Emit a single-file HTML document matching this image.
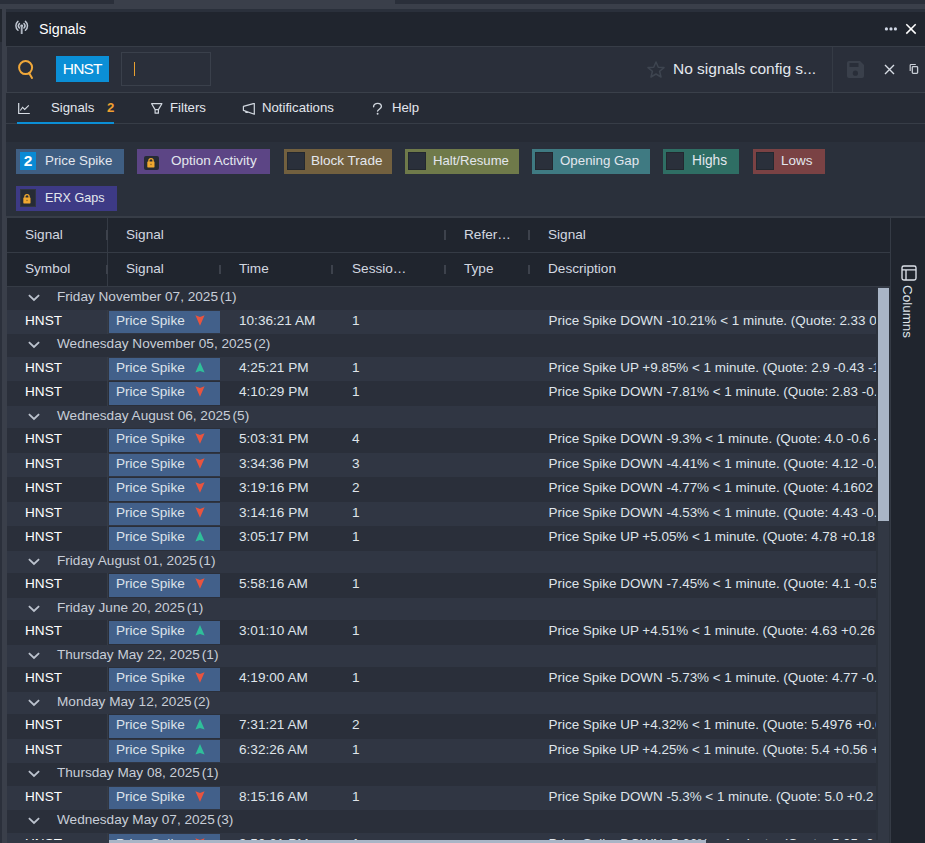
<!DOCTYPE html>
<html><head><meta charset="utf-8">
<style>
*{margin:0;padding:0;box-sizing:border-box}
html,body{width:925px;height:843px;overflow:hidden;background:#262b35;font-family:"Liberation Sans",sans-serif;color:#dfe4ea;font-size:13.6px}
.a{position:absolute}
.t{position:absolute;white-space:nowrap}
.chip{position:absolute;height:25px;color:#e3e7ee}
.chip span{position:absolute;top:4px;white-space:nowrap}
.num{position:absolute;left:4px;top:3px;width:16px;height:18px;background:#0a8ad4;color:#fff;font-weight:bold;font-size:15.5px;line-height:17.5px;text-align:center}
.cb{position:absolute;left:3px;top:3px;width:18px;height:18px;background:#2a303b;border:1px solid #23282f}
.lk{position:absolute;background:#262b35}
.hd{position:absolute;color:#d3d8e0;white-space:nowrap}
.tick{position:absolute;width:2px;height:10px;background:#3d424c}
.row{position:absolute;left:7px;width:869px;overflow:hidden;white-space:nowrap}
.even{background:#2a2f3a}
.odd{background:#303643}
.chev{position:absolute;left:20px;top:6px}
.gt{position:absolute;left:50px;top:1.5px;color:#c8ced8}
.gc{margin-left:2px}
.sep{position:absolute;left:100px;top:0;width:1px;height:100%;background:#363c46}
.sym{position:absolute;left:18px;top:2.5px;color:#fff}
.cell{position:absolute;left:102px;top:1px;width:111px;bottom:1px;background:#42608a;color:#dde3ea}
.cell span{position:absolute;left:7px;top:1.5px}
.ar{position:absolute;left:85.5px;top:4px}
.tm{position:absolute;left:232px;top:2.5px}
.ss{position:absolute;left:345px;top:2.5px}
.ds{position:absolute;left:541.5px;top:2.5px;font-size:13.45px}
</style></head><body>
<!-- frame -->
<div class="a" style="left:0;top:0;width:925px;height:4px;background:#2a2f3a"></div>
<div class="a" style="left:114px;top:0;width:281px;height:4px;background:#3a3f4a"></div>
<div class="a" style="left:0;top:4px;width:925px;height:839px;background:#2b303b"></div>
<div class="a" style="left:0;top:9px;width:2px;height:33px;background:#22272f"></div>
<div class="a" style="left:0;top:4px;width:925px;height:5px;background:#3a3f4a"></div>
<div class="a" style="left:2px;top:9px;width:5px;height:834px;background:#3a3f4a"></div>
<div class="a" style="left:6px;top:9px;width:919px;height:3px;background:#2a303b"></div>
<!-- header -->
<div class="a" style="left:6px;top:12px;width:919px;height:34px;background:#20252e"></div>
<svg class="a" style="left:14px;top:20px" width="16" height="15" viewBox="0 0 16 15"><g fill="none" stroke="#bfc6d1" stroke-width="1.5" stroke-linecap="round"><path d="M3.97 1.36 A5.8 5.8 0 0 0 3.97 10.24"/><path d="M11.43 1.36 A5.8 5.8 0 0 1 11.43 10.24"/><path d="M5.44 3.54 A3.2 3.2 0 0 0 5.44 8.06"/><path d="M9.96 3.54 A3.2 3.2 0 0 1 9.96 8.06"/></g><circle cx="7.7" cy="5.8" r="1.4" fill="#c8cfda"/><rect x="6.75" y="5.8" width="1.9" height="8.3" rx="0.5" fill="#aeb5c0"/></svg>
<span class="t" style="left:39px;top:21px;font-size:14.3px;color:#fff">Signals</span>
<svg class="a" style="left:883px;top:26px" width="16" height="6" viewBox="0 0 16 6"><circle cx="3.4" cy="2.9" r="1.6" fill="#d0d8e6"/><circle cx="8" cy="2.9" r="1.6" fill="#d0d8e6"/><circle cx="12.4" cy="2.9" r="1.6" fill="#d0d8e6"/></svg>
<svg class="a" style="left:904px;top:22px" width="14" height="14" viewBox="0 0 14 14"><path d="M2.3 2.2 L11.7 11.6 M11.7 2.2 L2.3 11.6" stroke="#fff" stroke-width="1.5"/></svg>
<div class="a" style="left:6px;top:46px;width:919px;height:1px;background:#373d47"></div>
<!-- toolbar -->
<div class="a" style="left:7px;top:47px;width:918px;height:45px;background:#2a2f3a"></div>
<svg class="a" style="left:14px;top:54px" width="26" height="30" viewBox="0 0 26 30"><circle cx="11.6" cy="13.6" r="6.5" fill="none" stroke="#f0a83a" stroke-width="2"/><path d="M15.2 19.2 L18 24" stroke="#f0a83a" stroke-width="2" stroke-linecap="round"/></svg>
<div class="a" style="left:56px;top:56px;width:53px;height:26px;background:#0b8fd6"></div>
<span class="t" style="left:62.8px;top:59.6px;font-size:15.5px;letter-spacing:-0.8px;color:#fff">HNST</span>
<div class="a" style="left:121px;top:52px;width:90px;height:34px;border:1px solid #3a404b"></div>
<div class="a" style="left:133.5px;top:62px;width:1.5px;height:14px;background:#e8a030"></div>
<svg class="a" style="left:646.5px;top:61px" width="18" height="17" viewBox="0 0 18 17"><path d="M9 1 L11.3 6.2 L17 6.6 L12.6 10.3 L14 16 L9 13 L4 16 L5.4 10.3 L1 6.6 L6.7 6.2 Z" fill="none" stroke="#3e4550" stroke-width="1.5" stroke-linejoin="round"/></svg>
<span class="t" style="left:673px;top:60px;font-size:15.5px;color:#e3e7ee">No signals config s...</span>
<div class="a" style="left:832px;top:47px;width:1px;height:45px;background:#353b45"></div>
<svg class="a" style="left:846px;top:60px" width="19" height="19" viewBox="0 0 19 19"><path d="M3 1 H14 L18 5 V16 Q18 18 16 18 H3 Q1 18 1 16 V3 Q1 1 3 1 Z" fill="#3a404b"/><rect x="3.5" y="3" width="9" height="4" fill="#292e39"/><circle cx="9.4" cy="13.2" r="2.6" fill="#292e39"/></svg>
<svg class="a" style="left:883px;top:63px" width="13" height="13" viewBox="0 0 13 13"><path d="M2 2 L11 11 M11 2 L2 11" stroke="#d8dde5" stroke-width="1.4"/></svg>
<svg class="a" style="left:908px;top:63px" width="12" height="12" viewBox="0 0 12 12"><path d="M2.2 8 V2.3 Q2.2 1.5 3 1.5 H7.8" fill="none" stroke="#c8ced6" stroke-width="1.2"/><rect x="4.3" y="3.6" width="5.3" height="6.8" rx="0.8" fill="none" stroke="#c8ced6" stroke-width="1.3"/></svg>
<div class="a" style="left:7px;top:92px;width:918px;height:1px;background:#3a404a"></div>
<!-- tabs -->
<div class="a" style="left:6px;top:93px;width:919px;height:49px;background:#262b35"></div>
<svg class="a" style="left:18px;top:103px" width="13" height="12" viewBox="0 0 13 12"><path d="M0.7 0 V10.5 H11.8" fill="none" stroke="#d8dde5" stroke-width="1.2"/><path d="M2.3 7.5 L4.6 4.3 L6.7 6.5 L10.8 2.3" fill="none" stroke="#d8dde5" stroke-width="1.1"/></svg>
<span class="t" style="left:51px;top:100px;font-size:13.2px;color:#e3e7ee">Signals</span>
<span class="t" style="left:107px;top:100px;font-size:13.2px;color:#f0a030;font-weight:bold">2</span>
<svg class="a" style="left:146px;top:98px" width="22" height="22" viewBox="0 0 22 22"><path d="M5.6 5.7 H15.9 L12.4 11.6 H9.1 Z M9.1 11.6 V15.2 H12.4 V11.6" fill="none" stroke="#d0d6de" stroke-width="1.2" stroke-linejoin="round"/></svg>
<span class="t" style="left:170px;top:100px;font-size:13.2px;color:#e3e7ee">Filters</span>
<svg class="a" style="left:242px;top:103px" width="14" height="13" viewBox="0 0 14 13"><path d="M1.4 3.4 L12.3 0.3 V11.3 L1.4 7.4 Z M3.4 8.1 L4 9.5 L5.8 9.3" fill="none" stroke="#d0d6de" stroke-width="1.2" stroke-linejoin="round"/></svg>
<span class="t" style="left:262px;top:100px;font-size:13.2px;color:#e3e7ee">Notifications</span>
<svg class="a" style="left:366px;top:98px" width="24" height="22" viewBox="0 0 24 22"><path d="M7.6 8.8 C7.6 6.6 9.4 5.4 11.7 5.4 C14 5.4 15.4 6.8 15.4 8.6 C15.4 10.6 12.6 11 11.6 13" fill="none" stroke="#d0d6de" stroke-width="1.4" stroke-linecap="round"/><circle cx="11.6" cy="15.7" r="0.95" fill="#d0d6de"/></svg>
<span class="t" style="left:392px;top:100px;font-size:13.2px;color:#e3e7ee">Help</span>
<div class="a" style="left:6px;top:123px;width:919px;height:1px;background:#373d47"></div>
<div class="a" style="left:17px;top:122px;width:97px;height:2px;background:#0b8fd6"></div>
<!-- chips -->
<div class="a" style="left:6px;top:142px;width:919px;height:74px;background:#2a303b"></div>

<div class="chip" style="left:16px;top:149px;width:108px;background:#3f5e82"><div class="num">2</div><span style="left:29px;font-size:13.33px">Price Spike</span></div>
<div class="chip" style="left:137px;top:149px;width:133px;background:#5c4585"><div class="lk" style="left:7px;top:7px;width:15px;height:14px;border-radius:2px"><svg width="8" height="10" viewBox="0 0 8 10" style="position:absolute;left:50%;top:50%;margin-left:-4.6px;margin-top:-5.5px"><path d="M1.9 4 V2.8 Q1.9 0.7 4 0.7 Q6.1 0.7 6.1 2.8 V4" fill="none" stroke="#f0a830" stroke-width="1.3"/><rect x="0.3" y="3.4" width="7.2" height="6" rx="0.6" fill="#f0a830"/><rect x="3.4" y="5.8" width="1.2" height="1.3" fill="#8a6420"/></svg></div><span style="left:34px;font-size:13.52px">Option Activity</span></div>
<div class="chip" style="left:284px;top:149px;width:108px;background:#72603f"><div class="cb"></div><span style="left:27px;font-size:13.54px">Block Trade</span></div>
<div class="chip" style="left:405px;top:149px;width:114px;background:#6f7a4a"><div class="cb"></div><span style="left:28px;font-size:13.14px">Halt/Resume</span></div>
<div class="chip" style="left:532px;top:149px;width:118px;background:#3f7a82"><div class="cb"></div><span style="left:28px;font-size:13.31px">Opening Gap</span></div>
<div class="chip" style="left:663px;top:149px;width:76px;background:#2f6e64"><div class="cb"></div><span style="left:29px;font-size:13.73px">Highs</span></div>
<div class="chip" style="left:753px;top:149px;width:72px;background:#7a4244"><div class="cb"></div><span style="left:28px;font-size:13.46px">Lows</span></div>
<div class="chip" style="left:16px;top:186px;width:101px;background:#3d3a85"><div class="lk" style="left:4px;top:3px;width:16px;height:18px;border:1px solid #30353f"><svg width="8" height="10" viewBox="0 0 8 10" style="position:absolute;left:50%;top:50%;margin-left:-4.6px;margin-top:-4px"><path d="M1.9 4 V2.8 Q1.9 0.7 4 0.7 Q6.1 0.7 6.1 2.8 V4" fill="none" stroke="#f0a830" stroke-width="1.3"/><rect x="0.3" y="3.4" width="7.2" height="6" rx="0.6" fill="#f0a830"/><rect x="3.4" y="5.8" width="1.2" height="1.3" fill="#8a6420"/></svg></div><span style="left:29px;top:5px;font-size:12.6px">ERX Gaps</span></div>

<div class="a" style="left:6px;top:216px;width:919px;height:2px;background:#373d47"></div>
<!-- grid header -->
<div class="a" style="left:7px;top:218px;width:918px;height:625px;background:#20252e"></div>
<div class="a" style="left:107px;top:218px;width:1px;height:68px;background:#353b45"></div>
<div class="a" style="left:7px;top:252px;width:883px;height:1px;background:#353b45"></div>
<div class="a" style="left:7px;top:286px;width:883px;height:1px;background:#353b45"></div>
<div class="a" style="left:890px;top:218px;width:1px;height:625px;background:#353b45"></div>
<span class="hd" style="left:25px;top:227px">Signal</span>
<span class="hd" style="left:126px;top:227px">Signal</span>
<span class="hd" style="left:464px;top:227px">Refer&hellip;</span>
<span class="hd" style="left:548px;top:227px">Signal</span>
<span class="hd" style="left:25px;top:261px">Symbol</span>
<span class="hd" style="left:126px;top:261px">Signal</span>
<span class="hd" style="left:239px;top:261px">Time</span>
<span class="hd" style="left:352px;top:261px">Sessio&hellip;</span>
<span class="hd" style="left:464px;top:261px">Type</span>
<span class="hd" style="left:548px;top:261px">Description</span>
<div class="tick" style="left:106px;top:230px"></div>
<div class="tick" style="left:444px;top:230px"></div>
<div class="tick" style="left:528px;top:230px"></div>
<div class="tick" style="left:106px;top:265px;height:9px"></div>
<div class="tick" style="left:219px;top:265px;height:9px"></div>
<div class="tick" style="left:331px;top:265px;height:9px"></div>
<div class="tick" style="left:444px;top:265px;height:9px"></div>
<div class="tick" style="left:528px;top:265px;height:9px"></div>
<!-- side -->
<svg class="a" style="left:900px;top:264px" width="18" height="18" viewBox="0 0 18 18"><rect x="2" y="2" width="14" height="14" rx="1.8" fill="none" stroke="#dde2ea" stroke-width="1.35"/><path d="M2 5.8 H16 M6 5.8 V16" stroke="#dde2ea" stroke-width="1.35"/></svg>
<span class="t" style="left:915px;top:285px;font-size:13.45px;transform-origin:0 0;transform:rotate(90deg);color:#dfe4ea">Columns</span>
<!-- rows -->
<div class="row even" style="top:287px;height:23px"><svg class="chev" width="14" height="9" viewBox="0 0 14 9"><path d="M1.9 2.1 L7 7 L12.1 2.1" fill="none" stroke="#bcc3ce" stroke-width="1.8"/></svg><span class="gt">Friday November 07, 2025<span class="gc">(1)</span></span></div>
<div class="row odd" style="top:310px;height:24px"><div class="sep"></div><span class="sym">HNST</span><div class="cell"><span>Price Spike</span><svg class="ar" width="10" height="11" viewBox="0 0 10 11"><path d="M0.4 0.2 L5 2.1 L9.6 0.2 L5 10.8 Z" fill="#e8543f"/></svg></div><span class="tm">10:36:21 AM</span><span class="ss">1</span><span class="ds">Price Spike DOWN -10.21% &lt; 1 minute. (Quote: 2.33 0.00 -0.27 -10.38%)</span></div>
<div class="row even" style="top:334px;height:23px"><svg class="chev" width="14" height="9" viewBox="0 0 14 9"><path d="M1.9 2.1 L7 7 L12.1 2.1" fill="none" stroke="#bcc3ce" stroke-width="1.8"/></svg><span class="gt">Wednesday November 05, 2025<span class="gc">(2)</span></span></div>
<div class="row odd" style="top:357px;height:24px"><div class="sep"></div><span class="sym">HNST</span><div class="cell"><span>Price Spike</span><svg class="ar" width="10" height="11" viewBox="0 0 10 11"><path d="M0.4 10.6 L5 9.1 L9.6 10.6 L5 0 Z" fill="#2fbf9a"/></svg></div><span class="tm">4:25:21 PM</span><span class="ss">1</span><span class="ds">Price Spike UP +9.85% &lt; 1 minute. (Quote: 2.9 -0.43 -12.91%)</span></div>
<div class="row even" style="top:381px;height:25px"><div class="sep"></div><span class="sym">HNST</span><div class="cell"><span>Price Spike</span><svg class="ar" width="10" height="11" viewBox="0 0 10 11"><path d="M0.4 0.2 L5 2.1 L9.6 0.2 L5 10.8 Z" fill="#e8543f"/></svg></div><span class="tm">4:10:29 PM</span><span class="ss">1</span><span class="ds">Price Spike DOWN -7.81% &lt; 1 minute. (Quote: 2.83 -0.50 -15.02%)</span></div>
<div class="row odd" style="top:406px;height:22px"><svg class="chev" width="14" height="9" viewBox="0 0 14 9"><path d="M1.9 2.1 L7 7 L12.1 2.1" fill="none" stroke="#bcc3ce" stroke-width="1.8"/></svg><span class="gt">Wednesday August 06, 2025<span class="gc">(5)</span></span></div>
<div class="row even" style="top:428px;height:25px"><div class="sep"></div><span class="sym">HNST</span><div class="cell"><span>Price Spike</span><svg class="ar" width="10" height="11" viewBox="0 0 10 11"><path d="M0.4 0.2 L5 2.1 L9.6 0.2 L5 10.8 Z" fill="#e8543f"/></svg></div><span class="tm">5:03:31 PM</span><span class="ss">4</span><span class="ds">Price Spike DOWN -9.3% &lt; 1 minute. (Quote: 4.0 -0.6 -13.04%)</span></div>
<div class="row odd" style="top:453px;height:24px"><div class="sep"></div><span class="sym">HNST</span><div class="cell"><span>Price Spike</span><svg class="ar" width="10" height="11" viewBox="0 0 10 11"><path d="M0.4 0.2 L5 2.1 L9.6 0.2 L5 10.8 Z" fill="#e8543f"/></svg></div><span class="tm">3:34:36 PM</span><span class="ss">3</span><span class="ds">Price Spike DOWN -4.41% &lt; 1 minute. (Quote: 4.12 -0.48 -10.43%)</span></div>
<div class="row even" style="top:477px;height:25px"><div class="sep"></div><span class="sym">HNST</span><div class="cell"><span>Price Spike</span><svg class="ar" width="10" height="11" viewBox="0 0 10 11"><path d="M0.4 0.2 L5 2.1 L9.6 0.2 L5 10.8 Z" fill="#e8543f"/></svg></div><span class="tm">3:19:16 PM</span><span class="ss">2</span><span class="ds">Price Spike DOWN -4.77% &lt; 1 minute. (Quote: 4.1602 -0.44 -9.56%)</span></div>
<div class="row odd" style="top:502px;height:24px"><div class="sep"></div><span class="sym">HNST</span><div class="cell"><span>Price Spike</span><svg class="ar" width="10" height="11" viewBox="0 0 10 11"><path d="M0.4 0.2 L5 2.1 L9.6 0.2 L5 10.8 Z" fill="#e8543f"/></svg></div><span class="tm">3:14:16 PM</span><span class="ss">1</span><span class="ds">Price Spike DOWN -4.53% &lt; 1 minute. (Quote: 4.43 -0.17 -3.70%)</span></div>
<div class="row even" style="top:526px;height:25px"><div class="sep"></div><span class="sym">HNST</span><div class="cell"><span>Price Spike</span><svg class="ar" width="10" height="11" viewBox="0 0 10 11"><path d="M0.4 10.6 L5 9.1 L9.6 10.6 L5 0 Z" fill="#2fbf9a"/></svg></div><span class="tm">3:05:17 PM</span><span class="ss">1</span><span class="ds">Price Spike UP +5.05% &lt; 1 minute. (Quote: 4.78 +0.18 +3.91%)</span></div>
<div class="row odd" style="top:551px;height:22px"><svg class="chev" width="14" height="9" viewBox="0 0 14 9"><path d="M1.9 2.1 L7 7 L12.1 2.1" fill="none" stroke="#bcc3ce" stroke-width="1.8"/></svg><span class="gt">Friday August 01, 2025<span class="gc">(1)</span></span></div>
<div class="row even" style="top:573px;height:25px"><div class="sep"></div><span class="sym">HNST</span><div class="cell"><span>Price Spike</span><svg class="ar" width="10" height="11" viewBox="0 0 10 11"><path d="M0.4 0.2 L5 2.1 L9.6 0.2 L5 10.8 Z" fill="#e8543f"/></svg></div><span class="tm">5:58:16 AM</span><span class="ss">1</span><span class="ds">Price Spike DOWN -7.45% &lt; 1 minute. (Quote: 4.1 -0.5 -10.87%)</span></div>
<div class="row odd" style="top:598px;height:22px"><svg class="chev" width="14" height="9" viewBox="0 0 14 9"><path d="M1.9 2.1 L7 7 L12.1 2.1" fill="none" stroke="#bcc3ce" stroke-width="1.8"/></svg><span class="gt">Friday June 20, 2025<span class="gc">(1)</span></span></div>
<div class="row even" style="top:620px;height:25px"><div class="sep"></div><span class="sym">HNST</span><div class="cell"><span>Price Spike</span><svg class="ar" width="10" height="11" viewBox="0 0 10 11"><path d="M0.4 10.6 L5 9.1 L9.6 10.6 L5 0 Z" fill="#2fbf9a"/></svg></div><span class="tm">3:01:10 AM</span><span class="ss">1</span><span class="ds">Price Spike UP +4.51% &lt; 1 minute. (Quote: 4.63 +0.26 +5.95%)</span></div>
<div class="row odd" style="top:645px;height:22px"><svg class="chev" width="14" height="9" viewBox="0 0 14 9"><path d="M1.9 2.1 L7 7 L12.1 2.1" fill="none" stroke="#bcc3ce" stroke-width="1.8"/></svg><span class="gt">Thursday May 22, 2025<span class="gc">(1)</span></span></div>
<div class="row even" style="top:667px;height:25px"><div class="sep"></div><span class="sym">HNST</span><div class="cell"><span>Price Spike</span><svg class="ar" width="10" height="11" viewBox="0 0 10 11"><path d="M0.4 0.2 L5 2.1 L9.6 0.2 L5 10.8 Z" fill="#e8543f"/></svg></div><span class="tm">4:19:00 AM</span><span class="ss">1</span><span class="ds">Price Spike DOWN -5.73% &lt; 1 minute. (Quote: 4.77 -0.28 -5.54%)</span></div>
<div class="row odd" style="top:692px;height:22px"><svg class="chev" width="14" height="9" viewBox="0 0 14 9"><path d="M1.9 2.1 L7 7 L12.1 2.1" fill="none" stroke="#bcc3ce" stroke-width="1.8"/></svg><span class="gt">Monday May 12, 2025<span class="gc">(2)</span></span></div>
<div class="row even" style="top:714px;height:25px"><div class="sep"></div><span class="sym">HNST</span><div class="cell"><span>Price Spike</span><svg class="ar" width="10" height="11" viewBox="0 0 10 11"><path d="M0.4 10.6 L5 9.1 L9.6 10.6 L5 0 Z" fill="#2fbf9a"/></svg></div><span class="tm">7:31:21 AM</span><span class="ss">2</span><span class="ds">Price Spike UP +4.32% &lt; 1 minute. (Quote: 5.4976 +0.62 +12.7%)</span></div>
<div class="row odd" style="top:739px;height:24px"><div class="sep"></div><span class="sym">HNST</span><div class="cell"><span>Price Spike</span><svg class="ar" width="10" height="11" viewBox="0 0 10 11"><path d="M0.4 10.6 L5 9.1 L9.6 10.6 L5 0 Z" fill="#2fbf9a"/></svg></div><span class="tm">6:32:26 AM</span><span class="ss">1</span><span class="ds">Price Spike UP +4.25% &lt; 1 minute. (Quote: 5.4 +0.56 +11.57%)</span></div>
<div class="row even" style="top:763px;height:23px"><svg class="chev" width="14" height="9" viewBox="0 0 14 9"><path d="M1.9 2.1 L7 7 L12.1 2.1" fill="none" stroke="#bcc3ce" stroke-width="1.8"/></svg><span class="gt">Thursday May 08, 2025<span class="gc">(1)</span></span></div>
<div class="row odd" style="top:786px;height:24px"><div class="sep"></div><span class="sym">HNST</span><div class="cell"><span>Price Spike</span><svg class="ar" width="10" height="11" viewBox="0 0 10 11"><path d="M0.4 0.2 L5 2.1 L9.6 0.2 L5 10.8 Z" fill="#e8543f"/></svg></div><span class="tm">8:15:16 AM</span><span class="ss">1</span><span class="ds">Price Spike DOWN -5.3% &lt; 1 minute. (Quote: 5.0 +0.2 +4.17%)</span></div>
<div class="row even" style="top:810px;height:23px"><svg class="chev" width="14" height="9" viewBox="0 0 14 9"><path d="M1.9 2.1 L7 7 L12.1 2.1" fill="none" stroke="#bcc3ce" stroke-width="1.8"/></svg><span class="gt">Wednesday May 07, 2025<span class="gc">(3)</span></span></div>
<div class="row odd" style="top:833px;height:24px"><div class="sep"></div><span class="sym">HNST</span><div class="cell"><span>Price Spike</span><svg class="ar" width="10" height="11" viewBox="0 0 10 11"><path d="M0.4 0.2 L5 2.1 L9.6 0.2 L5 10.8 Z" fill="#e8543f"/></svg></div><span class="tm">3:50:21 PM</span><span class="ss">1</span><span class="ds">Price Spike DOWN -5.66% &lt; 1 minute. (Quote: 5.05 -0.1 -1.94%)</span></div>
<!-- scrollbars -->
<div class="a" style="left:876px;top:287px;width:14px;height:556px;background:#2b313b"></div>
<div class="a" style="left:878px;top:287px;width:11px;height:556px;background:#323844"></div>
<div class="a" style="left:878px;top:288px;width:11px;height:233px;background:#a9b5c6"></div>
<div class="a" style="left:7px;top:840px;width:871px;height:3px;background:#323844"></div>
<div class="a" style="left:109px;top:840px;width:597px;height:3px;background:#a9b5c6"></div>
</body></html>
